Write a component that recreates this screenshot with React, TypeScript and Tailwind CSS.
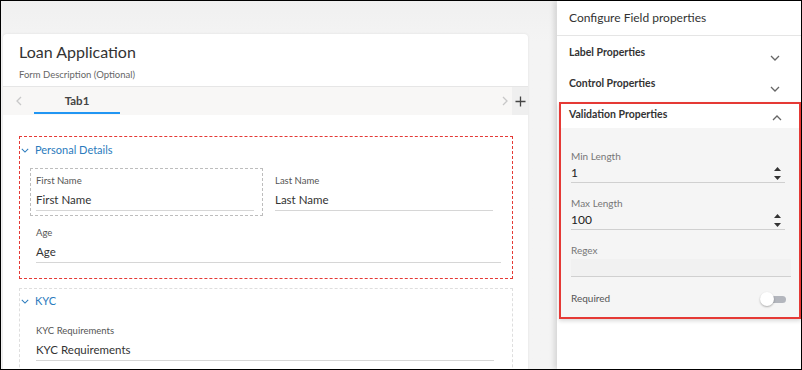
import React from "react";

const Chevron = ({ up = false, className = "" }: { up?: boolean; className?: string }) => (
  <svg width="10" height="6" viewBox="0 0 10 6" className={className}>
    <path d={up ? "M1 5 L5 1 L9 5" : "M1 1 L5 5 L9 1"} fill="none" stroke="currentColor" strokeWidth="1.3" />
  </svg>
);

const Spinner = () => (
  <div className="flex flex-col items-center gap-[5px] text-[#333]">
    <svg width="7" height="4" viewBox="0 0 7 4"><path d="M0 4 L3.5 0 L7 4 Z" fill="currentColor" /></svg>
    <svg width="7" height="4" viewBox="0 0 7 4"><path d="M0 0 L3.5 4 L7 0 Z" fill="currentColor" /></svg>
  </div>
);

const Field = ({ label, value, dashed = false }: { label: string; value: string; dashed?: boolean }) => (
  <div className={`h-[48px] pl-[5px] pr-[8px] pt-[6px] border ${dashed ? "border-dashed border-[#bdbdbd]" : "border-transparent"}`}>
    <div className="text-[9.5px] leading-[12px] text-[#555]">{label}</div>
    <div className="mt-[5px] text-[11.5px] leading-[16px] text-[#333] pb-[2px] border-b border-[#d6d6d6]">{value}</div>
  </div>
);

export default function App() {
  return (
    <div
      className="w-[802px] h-[370px] border border-black overflow-hidden flex bg-[#f3f3f3]"
      style={{ fontFamily: "Lato, 'Open Sans', sans-serif" }}
    >
      {/* Left area */}
      <div className="w-[555px] shrink-0 pt-[33px] pl-[2px] pr-[28px] bg-gradient-to-b from-[#f0f0f0] to-[#f4f4f4] to-[40px]">
        <div className="bg-white rounded-t-[4px] h-[400px] shadow-[0_0_3px_rgba(0,0,0,0.08)]">
          <div className="px-[16px] pt-[7px] h-[52px]">
            <div className="text-[16px] leading-[22px] text-[#333]">Loan Application</div>
            <div className="mt-[5px] text-[9.5px] leading-[14px] text-[#666]">Form Description (Optional)</div>
          </div>
          <div className="h-[29px] border-t border-[#e6e6e6] bg-[#f8f7f6] flex items-stretch">
            <div className="w-[31px] flex items-center justify-center text-[#c8c8c8]">
              <svg width="6" height="10" viewBox="0 0 6 10"><path d="M5 1 L1 5 L5 9" fill="none" stroke="currentColor" strokeWidth="1.3" /></svg>
            </div>
            <div className="w-[86px] flex flex-col items-center justify-center relative">
              <span className="text-[11.5px] font-bold text-[#444]">Tab1</span>
              <div className="absolute left-0 right-0 bottom-[1px] h-[2px] bg-[#2196f3]" />
            </div>
            <div className="flex-1" />
            <div className="w-[14px] flex items-center justify-center text-[#c8c8c8]">
              <svg width="6" height="10" viewBox="0 0 6 10"><path d="M1 1 L5 5 L1 9" fill="none" stroke="currentColor" strokeWidth="1.3" /></svg>
            </div>
            <div className="w-[16px] bg-[#efefef] flex items-center justify-center text-[#444]">
              <svg width="11" height="11" viewBox="0 0 11 11"><path d="M5.5 0.5 V10.5 M0.5 5.5 H10.5" stroke="currentColor" strokeWidth="1.3" /></svg>
            </div>
          </div>
          <div className="pl-[16px] pr-[15px] pt-[21px]">
            <div className="border border-dashed border-[#e53935] px-[10px] pb-[15px]">
              <div className="h-[31px] flex items-start pt-[5px] -ml-[9px] text-[#2b7bbd]">
                <Chevron className="w-[8px] h-[5px] mr-[6px] mt-[6px]" />
                <span className="text-[11px] leading-[16px]">Personal Details</span>
              </div>
              <div className="grid grid-cols-[233px_233px] gap-[6px]">
                <Field label="First Name" value="First Name" dashed />
                <Field label="Last Name" value="Last Name" />
              </div>
              <div className="mt-[5px] pl-[6px] pr-[1px] pt-[6px]">
                <div className="text-[9.5px] leading-[12px] text-[#555]">Age</div>
                <div className="mt-[5px] text-[11.5px] leading-[16px] text-[#333] pb-[2px] border-b border-[#d6d6d6]">Age</div>
              </div>
            </div>
            <div className="mt-[9px] border border-dashed border-[#dedede] px-[10px] h-[120px]">
              <div className="h-[24px] flex items-center -ml-[9px] text-[#2b7bbd]">
                <Chevron className="w-[8px] h-[5px] mr-[6px]" />
                <span className="text-[11px]">KYC</span>
              </div>
              <div className="mt-[12px] pl-[6px] pr-[8px]">
                <div className="text-[9.5px] leading-[12px] text-[#555]">KYC Requirements</div>
                <div className="mt-[5px] text-[11.5px] leading-[16px] text-[#333] pb-[2px] border-b border-[#d6d6d6]">KYC Requirements</div>
              </div>
            </div>
          </div>
        </div>
      </div>

      {/* Right panel */}
      <div className="ml-[1px] flex-1 bg-white shadow-[-3px_0_5px_rgba(0,0,0,0.12)] relative">
        <div className="h-[35px] border-b border-[#e5e5e5] pl-[12px] flex items-center">
          <span className="text-[12px] text-[#333]">Configure Field properties</span>
        </div>
        <div className="h-[31px] pl-[12px] pr-[21px] flex items-start pt-[9px] justify-between">
          <span className="text-[10.5px] font-bold text-[#333]">Label Properties</span>
          <Chevron className="mt-[10px] text-[#666]" />
        </div>
        <div className="h-[31px] pl-[12px] pr-[21px] flex items-start pt-[9px] justify-between">
          <span className="text-[10.5px] font-bold text-[#333]">Control Properties</span>
          <Chevron className="mt-[10px] text-[#666]" />
        </div>
        <div className="mt-[4px] ml-[2px] h-[217px] border-2 border-[#e53935] bg-[#f5f5f5] shadow-[0_2px_4px_rgba(0,0,0,0.15)]">
          <div className="h-[24px] bg-white pl-[8px] pr-[17px] flex items-start pt-[3px] justify-between">
            <span className="text-[10.5px] font-bold text-[#333]">Validation Properties</span>
            <Chevron up className="mt-[8px] text-[#666]" />
          </div>
          <div className="pl-[10px] pr-[14px] pt-[22px]">
            <div className="text-[10px] leading-[12px] text-[#777]">Min Length</div>
            <div className="mt-[3px] flex items-center justify-between border-b border-[#d0d0d0] pb-[1px]">
              <span className="text-[12px] leading-[16px] text-[#222]">1</span>
              <div className="pr-[4px]"><Spinner /></div>
            </div>
            <div className="mt-[14px] text-[10px] leading-[12px] text-[#777]">Max Length</div>
            <div className="mt-[3px] flex items-center justify-between border-b border-[#d0d0d0] pb-[1px]">
              <span className="text-[12px] leading-[16px] text-[#222]">100</span>
              <div className="pr-[4px]"><Spinner /></div>
            </div>
            <div className="mt-[14px] text-[10px] leading-[12px] text-[#777]">Regex</div>
            <div className="mt-[3px] h-[18px] bg-[#f1f1f1] border-b border-[#d0d0d0] -mr-[6px]" />
            <div className="mt-[14px] flex items-center justify-between">
              <span className="text-[10px] text-[#555]">Required</span>
              <div className="relative w-[26px] h-[14px] mr-[-1px]">
                <div className="absolute left-[6px] right-0 top-[4px] h-[7px] rounded-full bg-[#b3b6bd]" />
                <div className="absolute left-0 top-0 w-[14px] h-[14px] rounded-full bg-white shadow-[0_1px_2px_rgba(0,0,0,0.3)]" />
              </div>
            </div>
          </div>
        </div>
      </div>
    </div>
  );
}
